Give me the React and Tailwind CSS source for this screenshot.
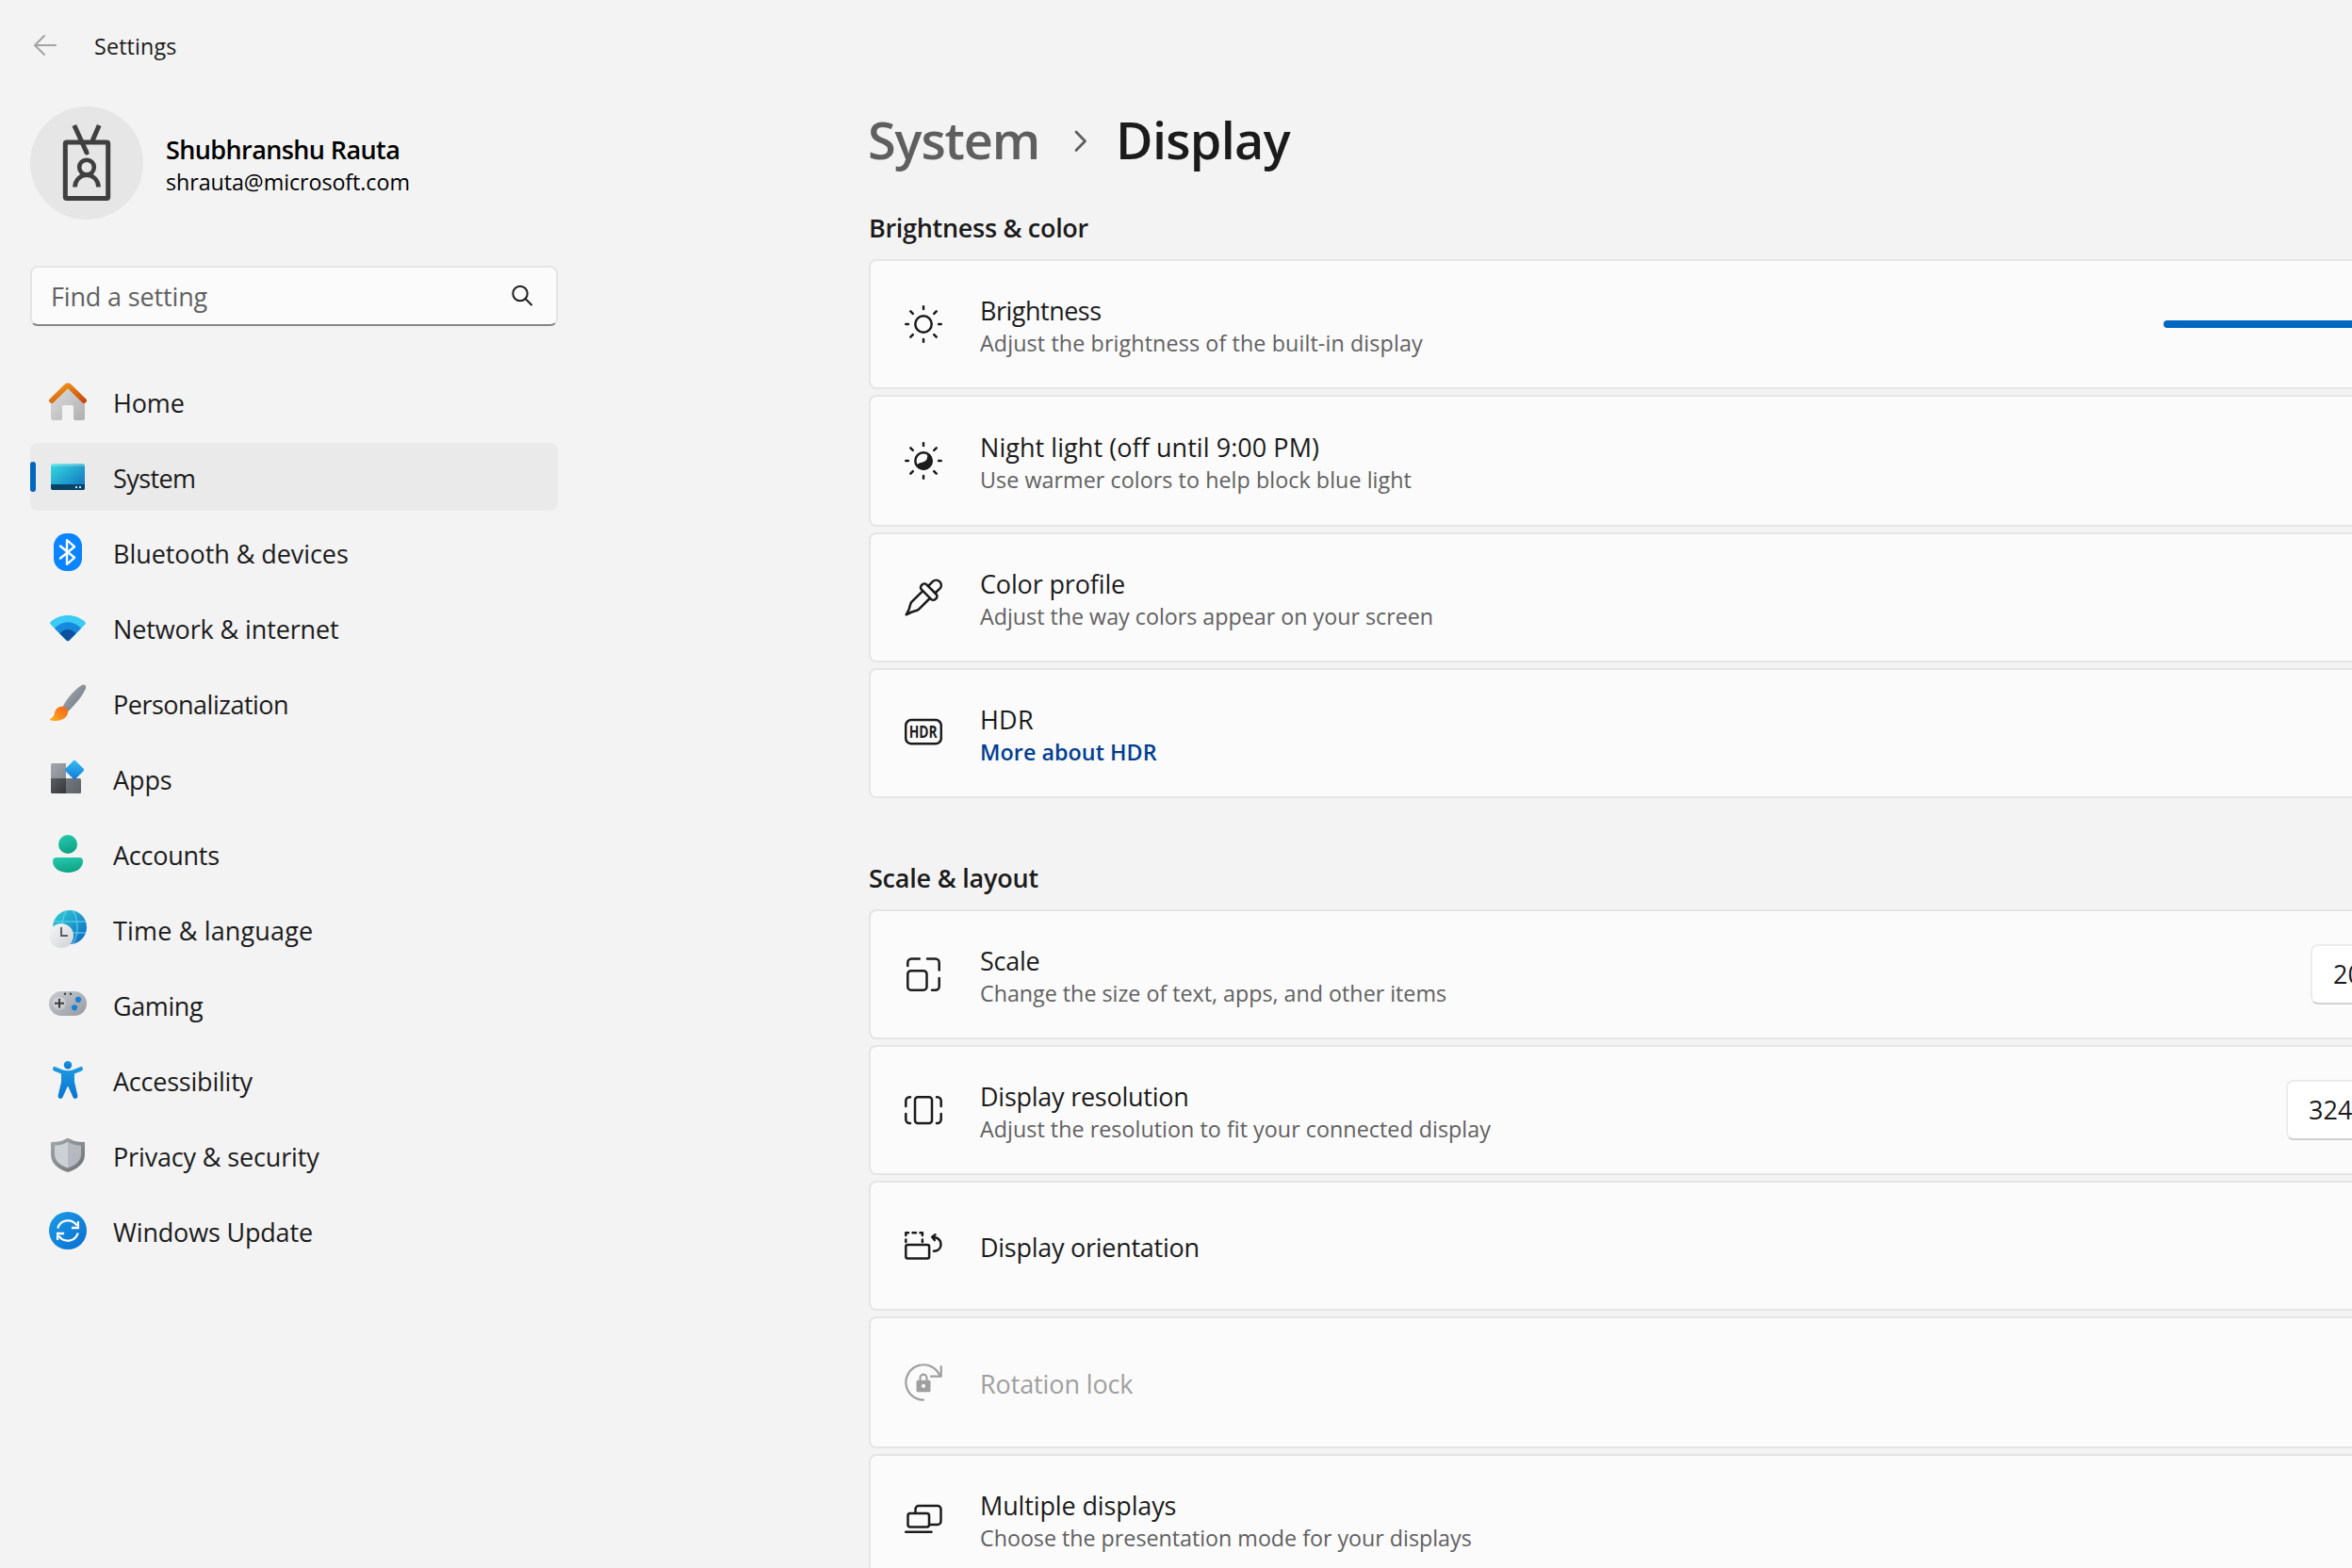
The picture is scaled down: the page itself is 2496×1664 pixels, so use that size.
import React from "react";

const NavSvg = ({ children }) => (
  <svg width="40" height="40" viewBox="0 0 40 40" fill="none" className="shrink-0">
    {children}
  </svg>
);

const Grad = ({ id, from, to, x1 = 0, y1 = 0, x2 = 1, y2 = 1 }) => (
  <linearGradient id={id} x1={x1} y1={y1} x2={x2} y2={y2}>
    <stop offset="0" stopColor={from} />
    <stop offset="1" stopColor={to} />
  </linearGradient>
);

const HomeIcon = () => (
  <NavSvg>
    <defs>
      <Grad id="hb" from="#dedede" to="#b0b0b0" />
      <Grad id="hr" from="#f59a1c" to="#c84a0c" />
    </defs>
    <path d="M20 4 38 20v18a2 2 0 0 1-2 2H28a2 2 0 0 1-2-2V26a2 2 0 0 0-2-2h-8a2 2 0 0 0-2 2v12a2 2 0 0 1-2 2H4a2 2 0 0 1-2-2V20Z" fill="url(#hb)" />
    <path d="M2.8 19.2 18.6 3.8a2 2 0 0 1 2.8 0L37.2 19.2" stroke="url(#hr)" strokeWidth="5.4" strokeLinecap="round" strokeLinejoin="round" />
  </NavSvg>
);

const SystemIcon = () => (
  <NavSvg>
    <defs>
      <Grad id="sy" from="#35dbe0" to="#0f6cbd" />
    </defs>
    <rect x="2" y="6" width="36" height="28" rx="2.5" fill="url(#sy)" />
    <path d="M2 8.5A2.5 2.5 0 0 1 4.500 6h31A2.500 2.500 0 0 1 38 8.500Z" fill="#fff" fillOpacity=".3" />
    <path d="M2 28h36v3.500a2.500 2.500 0 0 1-2.500 2.500h-31A2.500 2.500 0 0 1 2 31.500Z" fill="#0a4266" />
    <rect x="28" y="30" width="2" height="2" fill="#bfe6f7" />
    <rect x="32" y="30" width="2" height="2" fill="#bfe6f7" />
  </NavSvg>
);

const BluetoothIcon = () => (
  <NavSvg>
    <rect x="5" y="0" width="30" height="40" rx="13.500" fill="#0a84ff" />
    <path d="m12 13.500 15 12.300-8 7V7.200l8 7L12 26.500" stroke="#fff" strokeWidth="2.400" strokeLinecap="round" strokeLinejoin="round" />
  </NavSvg>
);

const NetworkIcon = () => (
  <NavSvg>
    <path d="M1.600 16.500a1.900 1.900 0 0 1 0-2.600C12 4.700 28 4.700 38.400 13.900a1.900 1.900 0 0 1 0 2.600L21.500 33.400a2.100 2.100 0 0 1-3 0Z" fill="#3ccbf4" />
    <path d="M5.900 20.800C14 12 26 12 34.100 20.800L21.500 33.400a2.100 2.100 0 0 1-3 0Z" fill="#1688de" />
    <path d="M11.400 26.300c5-5.700 12.200-5.700 17.200 0l-7.100 7.100a2.100 2.100 0 0 1-3 0Z" fill="#0c519f" />
  </NavSvg>
);

const BrushIcon = () => (
  <NavSvg>
    <defs>
      <Grad id="ph" from="#a9b0b7" to="#6b7279" />
      <Grad id="pb" from="#fbb01c" to="#f2611b" x1={0} y1={1} x2={1} y2={0} />
    </defs>
    <path d="M14.500 24C19 15 27 6 34.500 1.200 37.500-.5 40.200 1.800 38.800 5 35.500 12.500 28.500 20.500 20.500 29Z" fill="url(#ph)" />
    <path d="M14 23.700c3.500 0 6.700 2.800 6 6.800C18.700 38 9.500 40 1.800 38.600c-1.200-.4-.9-1.500 0-2 2.700-1.300 3.600-3.300 4.200-6.100.9-4.500 4-6.800 8-6.800Z" fill="url(#pb)" />
  </NavSvg>
);

const AppsIcon = () => (
  <NavSvg>
    <defs>
      <Grad id="aa" from="#a3a8ae" to="#858a91" />
      <Grad id="ab" from="#5a5e62" to="#35383b" />
      <Grad id="ac" from="#73787e" to="#5d6267" />
      <Grad id="ad" from="#35c1f1" to="#1277d8" />
    </defs>
    <path d="M3.500 4H18v16H2V5.500A1.500 1.500 0 0 1 3.500 4Z" fill="url(#aa)" />
    <path d="M2 20h16v16H3.500A1.500 1.500 0 0 1 2 34.500Z" fill="url(#ab)" />
    <path d="M18 20h14.500a1.500 1.500 0 0 1 1.500 1.500v13a1.500 1.500 0 0 1-1.500 1.500H18Z" fill="url(#ac)" />
    <rect x="19.300" y="3.300" width="15.400" height="15.400" rx="1.800" transform="rotate(45 27 11)" fill="url(#ad)" />
  </NavSvg>
);

const AccountsIcon = () => (
  <NavSvg>
    <defs>
      <Grad id="ua" from="#26cbb0" to="#10a487" x2={0.3} />
    </defs>
    <circle cx="20" cy="10" r="10" fill="url(#ua)" />
    <path d="M8 24h24a4 4 0 0 1 4 4c0 7-6.500 12-16 12S4 35 4 28a4 4 0 0 1 4-4Z" fill="url(#ua)" />
  </NavSvg>
);

const TimeIcon = () => (
  <NavSvg>
    <defs>
      <Grad id="ta" from="#2fd3d6" to="#0f62c0" />
      <Grad id="tb" from="#f7f7f7" to="#cfd2d6" />
      <clipPath id="tc"><circle cx="22" cy="18" r="18" /></clipPath>
    </defs>
    <circle cx="22" cy="18" r="18" fill="url(#ta)" />
    <g clipPath="url(#tc)" stroke="#5fd0f2" strokeWidth="1.500" strokeOpacity=".75">
      <ellipse cx="22" cy="18" rx="8" ry="19" />
      <path d="M4 12h36M4 24h36" />
    </g>
    <circle cx="13" cy="27" r="13" fill="url(#tb)" />
    <path d="M13 18v9h7" stroke="#5c6066" strokeWidth="2" />
  </NavSvg>
);

const GamingIcon = () => (
  <NavSvg>
    <defs>
      <Grad id="ga" from="#c9cdd2" to="#979ba1" />
    </defs>
    <rect x="0" y="6" width="40" height="26" rx="13" fill="url(#ga)" />
    <circle cx="11" cy="18.700" r="7" fill="#fff" fillOpacity=".28" />
    <path d="M11 13.700v10M6 18.700h10" stroke="#3c3c3c" strokeWidth="2" />
    <circle cx="31" cy="14.800" r="3.100" fill="#1a7fd6" />
    <circle cx="27" cy="23.300" r="3.100" fill="#1a7fd6" />
    <circle cx="17" cy="8.700" r="1.200" fill="#3c3c3c" />
    <circle cx="23" cy="8.700" r="1.200" fill="#3c3c3c" />
  </NavSvg>
);

const AccessibilityIcon = () => (
  <NavSvg>
    <defs>
      <Grad id="ya" from="#1d9ae3" to="#0a74d0" x2={0} />
    </defs>
    <circle cx="20" cy="4.200" r="4.200" fill="url(#ya)" />
    <path d="M6.900 6.200 15 9.400c3.500 1 6.500 1 10 0l8.100-3.200c1.200-.4 2.300.1 2.700 1.200.5 1.200 0 2.500-1.200 3L27 13.600V22l3.300 14.400c.4 1.600-.3 3-1.800 3.400-1.300.4-2.500-.2-3.100-1.500L20.600 27.500c-.3-.6-.9-.6-1.200 0l-4.800 10.800c-.6 1.300-1.800 1.900-3.100 1.500-1.500-.4-2.200-1.800-1.800-3.400L13 22v-8.400l-7.600-3.200c-1.200-.5-1.700-1.800-1.200-3 .4-1.100 1.500-1.600 2.700-1.200Z" fill="url(#ya)" />
  </NavSvg>
);

const ShieldIcon = () => (
  <NavSvg>
    <defs>
      <Grad id="sa" from="#a3a8ad" to="#6d7175" />
    </defs>
    <path d="M17.500 2.700c1.600-.9 3.400-.9 5 0C26.500 5 31 6.200 38 6v13c0 8.500-6 15-16.500 18.400a4 4 0 0 1-3 0C8 34 2 27.500 2 19V6c7 .2 11.500-1 15.500-3.300Z" fill="url(#sa)" />
    <path d="M20 5.600V33.500C11 30.500 6 25.600 6 18.500v-9c6 .1 10-1.300 14-3.900Z" fill="#cdd0d5" />
    <path d="M20 5.600V33.500c9-3 14-7.900 14-15v-9c-6 .1-10-1.300-14-3.900Z" fill="#b5b9bf" />
  </NavSvg>
);

const UpdateIcon = () => (
  <NavSvg>
    <defs>
      <Grad id="wa" from="#1b9be6" to="#0a6fd0" />
    </defs>
    <circle cx="20" cy="20" r="20" fill="url(#wa)" />
    <path d="M9.300 17.500A11.200 11.200 0 0 1 29.500 14.500M30.900 10v7h-7M30.700 22.500A11.200 11.200 0 0 1 10.500 25.500M9.100 30v-7h7" stroke="#fff" strokeWidth="2.300" />
  </NavSvg>
);

const navItems = [
  { label: "Home", icon: HomeIcon, cls: "tracking-[-0.15px]" },
  { label: "System", icon: SystemIcon, cls: "tracking-[-0.6px]", active: true },
  { label: "Bluetooth & devices", icon: BluetoothIcon, cls: "tracking-[-0.06px]" },
  { label: "Network & internet", icon: NetworkIcon, cls: "tracking-[-0.12px]" },
  { label: "Personalization", icon: BrushIcon, cls: "tracking-[-0.5px]" },
  { label: "Apps", icon: AppsIcon, cls: "tracking-[-0.1px]" },
  { label: "Accounts", icon: AccountsIcon, cls: "tracking-[-0.25px]" },
  { label: "Time & language", icon: TimeIcon, cls: "tracking-[0.16px]" },
  { label: "Gaming", icon: GamingIcon, cls: "tracking-[-0.4px]" },
  { label: "Accessibility", icon: AccessibilityIcon, cls: "tracking-[-0.22px]" },
  { label: "Privacy & security", icon: ShieldIcon, cls: "tracking-[-0.15px]" },
  { label: "Windows Update", icon: UpdateIcon, cls: "tracking-[-0.18px]" },
];

const LineSvg = ({ children }) => (
  <svg width="40" height="40" viewBox="0 0 40 40" fill="none" stroke="currentColor" strokeWidth="2.500" strokeLinecap="round" strokeLinejoin="round" className="shrink-0">
    {children}
  </svg>
);

const Rays = () => (
  <path d="M20 1.300v2.600M20 36.100v2.600M1.300 20h2.600M36.100 20h2.600M6.300 6.300l2.500 2.500M31.200 31.200l2.500 2.500M6.300 33.700l2.500-2.500M31.200 8.800l2.500-2.500" />
);

const SunIcon = () => (
  <LineSvg>
    <circle cx="20" cy="20" r="8.700" />
    <Rays />
  </LineSvg>
);

const NightIcon = () => (
  <LineSvg>
    <circle cx="20" cy="20" r="8.700" />
    <path d="M24.700 13c.3 4.500-.8 7-3.700 8.300-2.800 1.300-5 .9-8.200 3.500a8.700 8.700 0 1 0 11.900-11.800Z" fill="currentColor" strokeWidth="1" />
    <Rays />
  </LineSvg>
);

const DropperIcon = () => (
  <LineSvg>
    <path d="M19 13.300 7.600 24.700a5 5 0 0 0-1.300 2.200L4.500 33 1.700 38.300 7.500 35.500l5.600-1.800a5 5 0 0 0 2.200-1.300L26.700 21" />
    <rect x="15.300" y="10.300" width="20.800" height="7.600" rx="3.200" transform="rotate(45 25.700 14.100)" />
    <path d="m25.200 7.800 4.600-4.600a5.300 5.300 0 0 1 7.400 7.600l-5.100 4.700" />
  </LineSvg>
);

const HdrIcon = () => (
  <LineSvg>
    <rect x="1.200" y="6" width="37.600" height="25.300" rx="6" />
    <text x="4.700" y="24.700" textLength="30" lengthAdjust="spacingAndGlyphs" stroke="none" fill="currentColor" fontSize="17" fontWeight="700" fontFamily="Open Sans, sans-serif">HDR</text>
  </LineSvg>
);

const ScaleIcon = () => (
  <LineSvg>
    <rect x="3.300" y="16.200" width="20.200" height="20.500" rx="3.500" />
    <path d="M3.300 11V7.500a4 4 0 0 1 4-4h8.500M24 3.500h8.700a4 4 0 0 1 4 4v8M36.700 24v8.700a4 4 0 0 1-4 4H29" />
  </LineSvg>
);

const ResolutionIcon = () => (
  <LineSvg>
    <rect x="11" y="6.200" width="18" height="27.800" rx="3" />
    <path d="M6 6.300h-.7a4 4 0 0 0-4 4V16M1.300 24v6a4 4 0 0 0 4 4H6M34 6.300h.7a4 4 0 0 1 4 4V16M38.700 24v6a4 4 0 0 1-4 4H34" />
  </LineSvg>
);

const OrientationIcon = () => (
  <LineSvg>
    <rect x="1.300" y="19" width="24.800" height="14.500" rx="2" />
    <path d="M1.300 9V6.300H4M8.500 6.300h3.500M16.500 6.300h2.400V9M1.300 13.500v2.500M18.900 13.500v2.500" />
    <path d="M31 25.800c4-.2 7.500-2.700 7.500-7.300 0-4.500-3.500-7-8-7.700M32.500 8.200l-3.300 2.600 2.600 3.300" />
  </LineSvg>
);

const RotationLockIcon = () => (
  <LineSvg>
    <path d="M20 38.700a18.700 18.700 0 1 1 17.600-25.200M38.700 3v10.700H28" strokeWidth="2.200" />
    <path d="M16.500 18.500v-3a3.500 3.800 0 0 1 7 0v3" strokeWidth="2.200" />
    <path fillRule="evenodd" stroke="none" fill="currentColor" d="M14 17.700h12a1.500 1.500 0 0 1 1.500 1.500v9.500a1.500 1.500 0 0 1-1.500 1.500H14a1.500 1.500 0 0 1-1.500-1.500v-9.500a1.500 1.500 0 0 1 1.500-1.500ZM20 21.700a2.100 2.100 0 1 0 0 4.200 2.100 2.100 0 0 0 0-4.200Z" />
  </LineSvg>
);

const MultipleIcon = () => (
  <LineSvg>
    <rect x="3.500" y="14" width="22.500" height="14.500" rx="2.500" />
    <path d="M11.500 13.500V9.500a3.500 3.500 0 0 1 3.500-3.500h20a3.500 3.500 0 0 1 3.500 3.500V22.500a3.500 3.500 0 0 1-3.500 3.500h-8.500M1.200 33.700H28.500" />
  </LineSvg>
);

function Card({ icon: Icon, title, titleCls, sub, subCls = "", link, disabled, tall, children }) {
  return (
    <div className={`flex items-center rounded-l-lg border-2 border-r-0 border-[#e5e5e5] bg-[#fbfbfb] pl-9 ${tall ? "h-[140px]" : "h-[138px]"} ${disabled ? "text-[#9f9f9f]" : "text-[#1b1b1b]"}`}>
      <Icon />
      <div className="ml-10 grow whitespace-nowrap pt-1">
        <div className={`text-[27px] leading-9 ${titleCls}`}>{title}</div>
        {sub && (
          <div className={`text-[23.3px] leading-8 ${link ? "font-semibold text-[#003e92]" : "text-[#616161]"} ${subCls}`}>{sub}</div>
        )}
      </div>
      {children}
    </div>
  );
}

const SectionTitle = ({ className, children }) => (
  <h2 className={`mb-3.5 h-[39px] text-[27px] font-semibold leading-[39px] ${className}`}>{children}</h2>
);

export default function App() {
  return (
    <div className="flex h-[1664px] w-[2496px] overflow-hidden bg-[#f3f3f3] font-['Open_Sans',sans-serif] text-[#1b1b1b]">
      <aside className="w-[890px] shrink-0 pl-8">
        <header className="flex h-[98px] items-center">
          <svg width="32" height="32" viewBox="0 0 32 32" fill="none" stroke="#a3a3a3" strokeWidth="2" strokeLinecap="round" strokeLinejoin="round">
            <path d="M27 15H5M15 5 5 15l10 10" />
          </svg>
          <span className="ml-9 text-[23.3px] tracking-[0.15px]">Settings</span>
        </header>

        <div className="mt-[15px] flex h-[120px] items-center">
          <svg width="120" height="120" viewBox="0 0 120 120" fill="none" stroke="#3f3f3f" strokeWidth="5">
            <circle cx="60" cy="60" r="60" fill="#e6e6e6" stroke="none" />
            <rect x="37.300" y="38" width="45.400" height="59.500" rx="1.500" />
            <path d="m46.800 20 13 28.500" strokeLinejoin="round" />
            <path d="m60 49-.4-.8" strokeLinecap="round" />
            <path d="M73.200 20 66 36.500" />
            <circle cx="60" cy="64.500" r="7.800" strokeWidth="4.600" />
            <path d="M47.500 85.500c0-7 5.500-12.800 12.500-12.800s12.500 5.800 12.500 12.800" strokeWidth="4.600" />
          </svg>
          <div className="ml-6 pt-[3px] text-black">
            <div className="text-[27px] font-semibold leading-9 tracking-[-0.6px]">Shubhranshu Rauta</div>
            <div className="text-[23.3px] leading-8 tracking-[-0.08px]">shrauta@microsoft.com</div>
          </div>
        </div>

        <div className="mt-[49px] flex h-16 w-[560px] items-center justify-between rounded-lg border-2 border-[#e5e5e5] border-b-[#868686] bg-[#fbfbfb] pl-5 pr-[22px]">
          <span className="pt-0.5 text-[27px] tracking-[-0.15px] text-[#616161]">Find a setting</span>
          <svg width="28" height="28" viewBox="0 0 28 28" fill="none" stroke="#1b1b1b" strokeWidth="2" strokeLinecap="round">
            <circle cx="12" cy="11.500" r="7.700" />
            <path d="m17.500 17 6.500 6.500" />
          </svg>
        </div>

        <nav className="mt-11 flex w-[560px] flex-col gap-2">
          {navItems.map(({ label, icon: Icon, cls, active }) => (
            <a key={label} className={`flex h-[72px] items-center rounded-lg ${active ? "bg-[#eaeaea]" : ""}`}>
              <span className={`mr-3.5 h-8 w-1.5 rounded-full ${active ? "bg-[#0067c0]" : ""}`} />
              <Icon />
              <span className={`ml-7 pt-[3px] text-[27px] leading-9 ${cls}`}>{label}</span>
            </a>
          ))}
        </nav>
      </aside>

      <main className="ml-8 min-w-0 grow pt-28">
        <h1 className="-ml-px flex h-[72px] items-center text-[54px] font-semibold leading-[72px]">
          <span className="w-[208px] tracking-[-1.1px] text-[#5f5f5f]">System</span>
          <svg width="40" height="40" viewBox="0 0 40 40" fill="none" stroke="#5f5f5f" strokeWidth="2.800" strokeLinecap="round" strokeLinejoin="round">
            <path d="m13 12 9.500 9.700-9.500 9.700" />
          </svg>
          <span className="ml-[15px] tracking-[-0.7px]">Display</span>
        </h1>

        <SectionTitle className="mt-[38px] tracking-[-0.3px]">Brightness &amp; color</SectionTitle>
        <div className="flex flex-col gap-1.5">
          <Card icon={SunIcon} title="Brightness" titleCls="tracking-[-0.5px]" sub="Adjust the brightness of the built-in display" subCls="tracking-[0.11px]">
            <div className="h-2 w-[200px] rounded-l-full bg-[#0067c0]" />
          </Card>
          <Card tall icon={NightIcon} title="Night light (off until 9:00 PM)" titleCls="tracking-[0.06px]" sub="Use warmer colors to help block blue light" subCls="tracking-[0.05px]" />
          <Card icon={DropperIcon} title="Color profile" titleCls="tracking-[-0.15px]" sub="Adjust the way colors appear on your screen" subCls="tracking-[-0.02px]" />
          <Card icon={HdrIcon} title="HDR" titleCls="tracking-[0.2px]" sub="More about HDR" link subCls="tracking-[0.05px]" />
        </div>

        <SectionTitle className="mt-[65px] tracking-[-0.22px]">Scale &amp; layout</SectionTitle>
        <div className="flex flex-col gap-1.5">
          <Card icon={ScaleIcon} title="Scale" titleCls="tracking-[-0.25px]" sub="Change the size of text, apps, and other items" subCls="tracking-[-0.02px]">
            <div className="flex h-16 w-11 items-center overflow-hidden rounded-l-lg border-2 border-r-0 border-[#ececec] border-b-[#d0d0d0] bg-white pl-[22px] text-[27px]">20</div>
          </Card>
          <Card icon={ResolutionIcon} title="Display resolution" titleCls="tracking-[-0.25px]" sub="Adjust the resolution to fit your connected display" subCls="tracking-[0.03px]">
            <div className="flex h-16 w-[70px] items-center overflow-hidden rounded-l-lg border-2 border-r-0 border-[#ececec] border-b-[#d0d0d0] bg-white pl-[22px] text-[27px]">324</div>
          </Card>
          <Card icon={OrientationIcon} title="Display orientation" titleCls="tracking-[-0.27px]" />
          <Card tall icon={RotationLockIcon} title="Rotation lock" titleCls="tracking-[-0.12px]" disabled />
          <Card icon={MultipleIcon} title="Multiple displays" titleCls="tracking-[-0.13px]" sub="Choose the presentation mode for your displays" subCls="tracking-[-0.03px]" />
        </div>
      </main>
    </div>
  );
}
